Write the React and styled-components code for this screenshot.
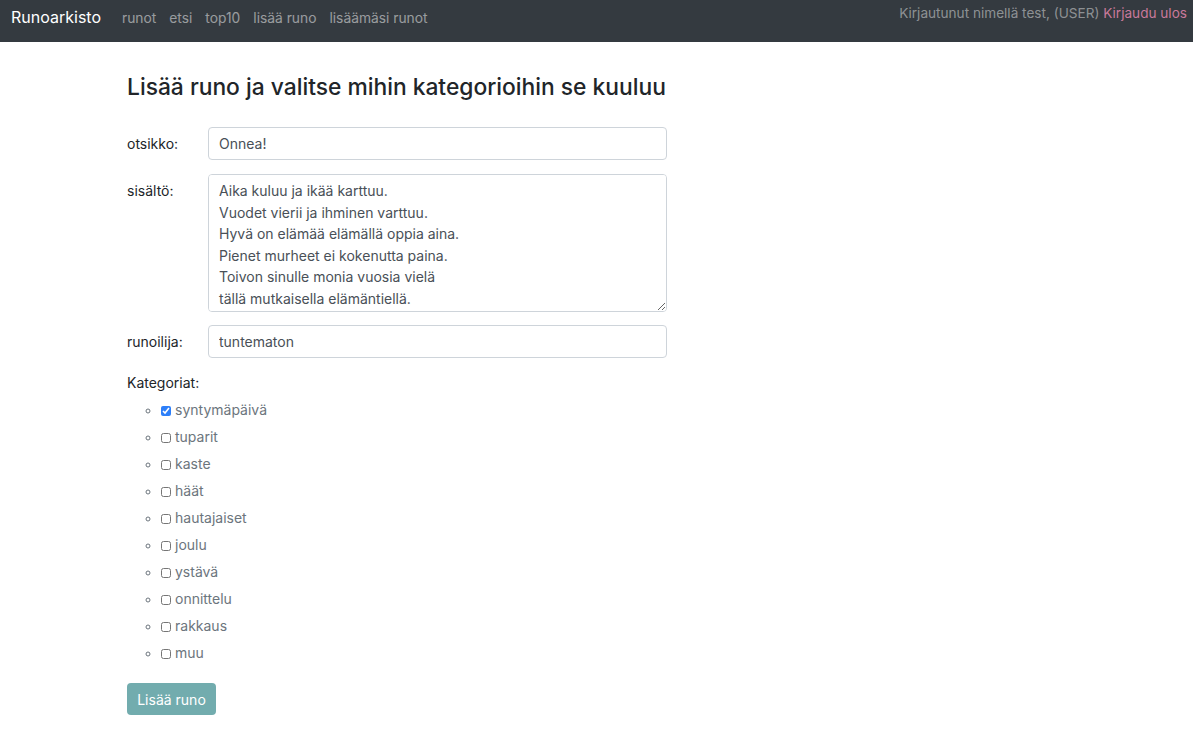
import React from "react";
import styled, { createGlobalStyle } from "styled-components";

const categories = [
  { name: "syntymäpäivä", checked: true },
  { name: "tuparit" },
  { name: "kaste" },
  { name: "häät" },
  { name: "hautajaiset" },
  { name: "joulu" },
  { name: "ystävä" },
  { name: "onnittelu" },
  { name: "rakkaus" },
  { name: "muu" },
];

const poem = `Aika kuluu ja ikää karttuu.
Vuodet vierii ja ihminen varttuu.
Hyvä on elämää elämällä oppia aina.
Pienet murheet ei kokenutta paina.
Toivon sinulle monia vuosia vielä
tällä mutkaisella elämäntiellä.`;

export default function App() {
  return (
    <>
      <GlobalStyle />
      <Navbar>
        <Brand>Runoarkisto</Brand>
        <NavLinks>
          <NavLink>runot</NavLink>
          <NavLink>etsi</NavLink>
          <NavLink>top10</NavLink>
          <NavLink>lisää runo</NavLink>
          <NavLink>lisäämäsi runot</NavLink>
        </NavLinks>
        <UserInfo>
          Kirjautunut nimellä test, (USER) <Logout>Kirjaudu ulos</Logout>
        </UserInfo>
      </Navbar>
      <Main>
        <Heading>Lisää runo ja valitse mihin kategorioihin se kuuluu</Heading>
        <FormRow>
          <Label>otsikko:</Label>
          <Input defaultValue="Onnea!" />
        </FormRow>
        <FormRow $gap={13}>
          <Label $top>sisältö:</Label>
          <TextArea defaultValue={poem} />
        </FormRow>
        <FormRow>
          <Label>runoilija:</Label>
          <Input defaultValue="tuntematon" />
        </FormRow>
        <SectionLabel>Kategoriat:</SectionLabel>
        <CategoryList>
          {categories.map((c) => (
            <CategoryItem key={c.name}>
              <CheckBox type="checkbox" defaultChecked={!!c.checked} />
              {c.name}
            </CategoryItem>
          ))}
        </CategoryList>
        <SubmitButton>Lisää runo</SubmitButton>
      </Main>
    </>
  );
}

const GlobalStyle = createGlobalStyle`
  body {
    margin: 0;
    font-family: Inter, "Noto Sans", "Liberation Sans", sans-serif;
    color: #212529;
    background: #fff;
  }
`;

const Navbar = styled.nav`
  height: 42px;
  background: #343a40;
  display: flex;
  align-items: flex-start;
  padding: 0 6px 0 11px;
  box-sizing: border-box;
`;

const Brand = styled.a`
  color: #fff;
  font-size: 16px;
  line-height: 35px;
  margin-right: 21px;
`;

const NavLinks = styled.div`
  display: flex;
  gap: 13px;
  padding-top: 1px;
`;

const NavLink = styled.a`
  color: rgba(255, 255, 255, 0.5);
  font-size: 13.8px;
  line-height: 35px;
`;

const UserInfo = styled.div`
  margin-left: auto;
  color: rgba(255, 255, 255, 0.45);
  font-size: 13.6px;
  line-height: 26px;
`;

const Logout = styled.a`
  color: #c9799b;
`;

const Main = styled.main`
  padding: 0 0 40px 127px;
  width: 540px;
  font-size: 14px;
`;

const Heading = styled.h3`
  font-size: 22.8px;
  font-weight: 500;
  margin: 29px 0 24px;
  line-height: 32px;
  white-space: nowrap;
`;

const FormRow = styled.div`
  display: flex;
  align-items: center;
  margin-bottom: ${(p) => p.$gap ?? 14}px;
`;

const Label = styled.label`
  width: 81px;
  flex-shrink: 0;
  align-self: ${(p) => (p.$top ? "flex-start" : "center")};
  padding-top: ${(p) => (p.$top ? "8px" : "0")};
`;

const fieldStyles = `
  width: 459px;
  box-sizing: border-box;
  border: 1px solid #ced4da;
  border-radius: 4px;
  font-family: inherit;
  font-size: 14px;
  color: #495057;
  padding: 6px 10px;
  outline: none;
`;

const Input = styled.input`
  ${fieldStyles}
  height: 33px;
`;

const TextArea = styled.textarea`
  ${fieldStyles}
  height: 138px;
  line-height: 21.5px;
  padding-top: 5px;
  resize: vertical;
`;

const SectionLabel = styled.div`
  margin-top: 15px;
  line-height: 20px;
`;

const CategoryList = styled.ul`
  list-style: circle;
  margin: 3px 0 17px;
  padding-left: 34px;
  color: #6c757d;
`;

const CategoryItem = styled.li`
  line-height: 27px;
  &::marker {
    color: #6c757d;
    font-size: 12px;
  }
`;

const CheckBox = styled.input`
  width: 10px;
  height: 10px;
  margin: 0 4px 0 0;
  vertical-align: -1px;
  accent-color: #2d7ff9;
`;

const SubmitButton = styled.button`
  background: #72acae;
  color: #fff;
  border: none;
  border-radius: 4px;
  font-family: inherit;
  font-size: 14px;
  width: 89px;
  height: 32px;
  padding: 0;
`;
